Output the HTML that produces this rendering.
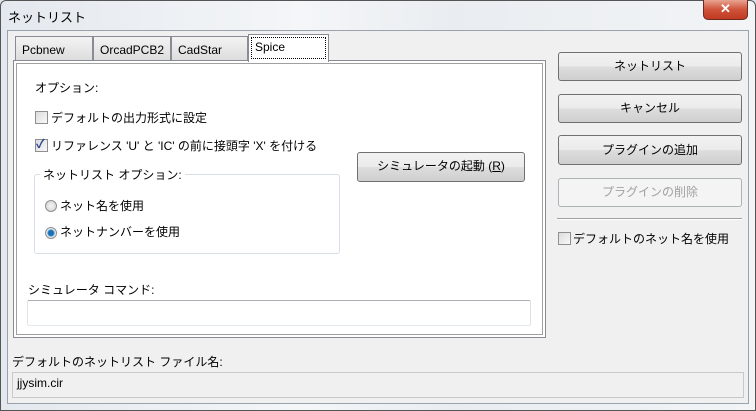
<!DOCTYPE html>
<html><head><meta charset="utf-8"><style>
*{margin:0;padding:0;box-sizing:border-box}
body{width:756px;height:411px;overflow:hidden;font-family:"Liberation Sans","Noto Sans CJK JP",sans-serif;font-size:12px;color:#000;background:#dfe5ec;position:relative}
.a{position:absolute;white-space:nowrap}
.frame{position:absolute;left:0;top:0;width:756px;height:411px;background:linear-gradient(90deg,#e4e9ef,#f4f6f8 40%,#e9edf1 60%,#f2f4f6);border:1px solid #555;border-radius:6px 6px 0 0}
.client{position:absolute;left:7px;top:30px;width:742px;height:374px;background:#f0f0f0;border:1px solid #9aa3ad}
.btn{position:absolute;border:1px solid #707070;border-radius:3px;background:linear-gradient(#f2f2f2,#ebebeb 50%,#dddddd 51%,#cfcfcf);text-align:center;font-size:12px}
.cb{position:absolute;width:13px;height:13px;border:1px solid #8f8f8f;background:linear-gradient(135deg,#dcdcdc,#f8f8f8)}
.rd{position:absolute;width:12px;height:12px;border:1px solid #8f8f8f;border-radius:50%;background:radial-gradient(#f4f4f4,#d0d0d0)}
.tab{position:absolute;top:36px;height:25px;border:1px solid #898c95;border-bottom:none;background:linear-gradient(#f3f3f3,#dcdcdc);padding:6px 0 0 6px;font-size:12px}
</style></head><body>
<div class="frame"></div>
<div class="a" style="left:8px;top:7px;font-size:13px">ネットリスト</div>
<div class="a" style="left:703px;top:0;width:45px;height:20px;border:1px solid #6d2a1e;border-top:none;border-radius:0 0 5px 5px;background:linear-gradient(#e8a493,#d0533a 50%,#c03a22);color:#fff;text-align:center;font-weight:bold;font-size:13px;line-height:18px">✕</div>
<div class="client"></div>
<div class="tab" style="left:15px;width:78px">Pcbnew</div>
<div class="tab" style="left:93px;width:78px">OrcadPCB2</div>
<div class="tab" style="left:171px;width:77px">CadStar</div>
<div class="a" style="left:13px;top:60px;width:533px;height:278px;border:1px solid #898c95;background:#fff"></div>
<div class="a" style="left:16px;top:63px;width:527px;height:272px;border:1px solid #a0a0a0;background:#fff"></div>
<div class="a" style="left:248px;top:34px;width:81px;height:28px;border:1px solid #898c95;border-bottom:none;background:#fff"></div>
<div class="a" style="left:251px;top:37px;width:75px;height:22px;border:1px dotted #000;padding:2px 0 0 3px">Spice</div>
<div class="a" style="left:35px;top:79px">オプション:</div>
<div class="cb" style="left:35px;top:111px"></div>
<div class="a" style="left:51px;top:109px">デフォルトの出力形式に設定</div>
<div class="cb" style="left:35px;top:139px"></div>
<div class="a" style="left:36px;top:135px;color:#2a3f8f;font-size:12px;font-weight:bold">✓</div>
<div class="a" style="left:51px;top:137px">リファレンス 'U' と 'IC' の前に接頭字 'X' を付ける</div>
<div class="btn" style="left:357px;top:152px;width:168px;height:30px;line-height:27px">シミュレータの起動 (<u>R</u>)</div>
<div class="a" style="left:34px;top:174px;width:306px;height:80px;border:1px solid #d5dfe5;border-radius:3px"></div>
<div class="a" style="left:40px;top:166px;background:#fff;padding:0 3px">ネットリスト オプション:</div>
<div class="rd" style="left:45px;top:200px"></div>
<div class="a" style="left:60px;top:197px">ネット名を使用</div>
<div class="rd" style="left:45px;top:227px;background:radial-gradient(#1f6fb3 0 2.5px,#63b4e6 3.5px,#eaeaea 4px)"></div>
<div class="a" style="left:60px;top:223px">ネットナンバーを使用</div>
<div class="a" style="left:28px;top:281px">シミュレータ コマンド:</div>
<div class="a" style="left:27px;top:300px;width:504px;height:26px;border:1px solid #abadb3;border-color:#abadb3 #dbdfe6 #e3e9ef #e2e3ea;border-radius:2px;background:#fff"></div>
<div class="a" style="left:12px;top:353px">デフォルトのネットリスト ファイル名:</div>
<div class="a" style="left:12px;top:372px;width:732px;height:26px;border:1px solid #c8c8c8;background:#f0f0f0;padding:3px 0 0 4px">jjysim.cir</div>
<div class="btn" style="left:558px;top:52px;width:184px;height:29px;line-height:27px">ネットリスト</div>
<div class="btn" style="left:558px;top:94px;width:184px;height:29px;line-height:27px">キャンセル</div>
<div class="btn" style="left:558px;top:135px;width:184px;height:30px;line-height:28px">プラグインの追加</div>
<div class="btn" style="left:558px;top:178px;width:184px;height:29px;line-height:27px;background:#f4f4f4;border-color:#adb2b5;color:#a0a0a0">プラグインの削除</div>
<div class="a" style="left:557px;top:218px;width:185px;height:2px;border-top:1px solid #a0a0a0;border-bottom:1px solid #fff"></div>
<div class="cb" style="left:558px;top:232px"></div>
<div class="a" style="left:573px;top:230px">デフォルトのネット名を使用</div>
</body></html>
